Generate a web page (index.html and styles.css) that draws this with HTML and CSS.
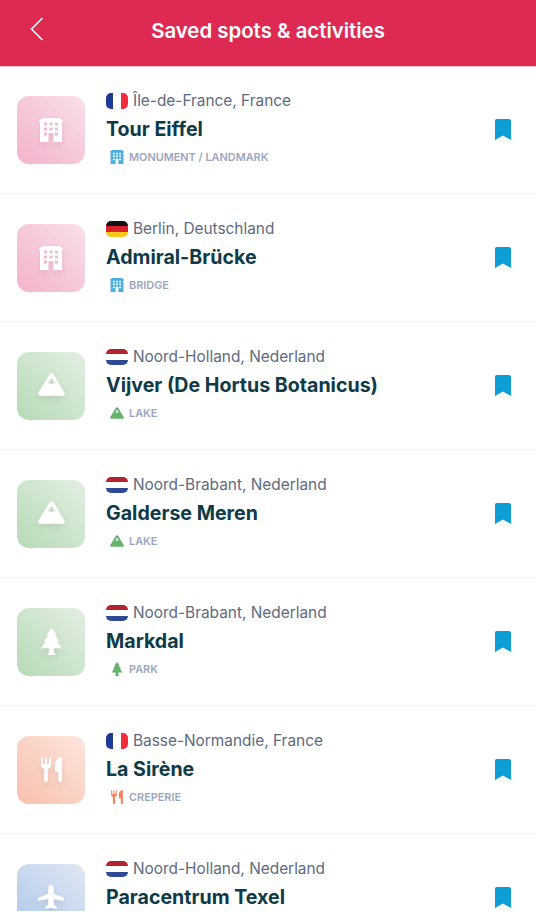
FILE: index.html
```html
<!DOCTYPE html>
<html lang="en">
<head>
	<meta charset="UTF-8">
	<title>Saved spots &amp; activities</title>
	<link rel="stylesheet" href="styles.css">
</head>
<body>
	<svg class="defs" width="0" height="0">
		<symbol id="i-building" viewBox="0 0 24 24">
			<path fill-rule="evenodd" d="M4 0H20L24 2.500V4H23V24H14.500V15H9.500V24H1V4H0V2.500ZM5 4.500V7.500H8V4.500ZM10.500 4.500V7.500H13.500V4.500ZM16 4.500V7.500H19V4.500ZM5 9.500V12.500H8V9.500ZM10.500 9.500V12.500H13.500V9.500ZM16 9.500V12.500H19V9.500ZM5 14.500V17.500H8V14.500ZM16 14.500V17.500H19V14.500Z"/>
		</symbol>
		<symbol id="i-mountain" viewBox="0 0 24 20">
			<path fill-rule="evenodd" d="M12 0C13 0 13.600 .6 14.200 1.600L23.400 16.800C24.400 18.500 23.500 20 21.600 20H2.400C.5 20-.4 18.500 .6 16.800L9.800 1.600C10.400 .6 11 0 12 0ZM12 4 8.500 9.800 10.500 8.600 12 10 13.500 8.600 15.500 9.800Z"/>
		</symbol>
		<symbol id="i-tree" viewBox="0 0 20 26">
			<path d="M10 0 15 6.500H13L17.500 12.500H15.500L20 19.500H12.500V23C12.500 24 13.500 25 14 26H6C6.500 25 7.500 24 7.500 23V19.500H0L4.500 12.500H2.500L7 6.500H5Z"/>
		</symbol>
		<symbol id="i-food" viewBox="0 0 21 25">
			<path d="M0 1C0 0 1.800 0 1.800 1V7H4.100V1C4.100 0 5.900 0 5.900 1V7H8.200V1C8.200 0 10 0 10 1V8.500C10 10.500 8.500 11.500 6.800 12V23.500C6.800 25.500 3.200 25.500 3.200 23.500V12C1.500 11.500 0 10.500 0 8.500ZM21 1V23.500C21 25.500 17.400 25.500 17.400 23.500V15H15.500C14.700 15 14 14.400 14 13.500V8C14 4 16.500 1.300 19.500 .2 20.400 -.1 21 .2 21 1Z"/>
		</symbol>
		<symbol id="i-plane" viewBox="0 0 28 28">
			<path d="M14 0C15.600 0 17 1.800 17 3.500V9.500L27 13.500C27.600 13.800 28 14.200 28 15V17L17 15V21L20 23.500V25.500L14 24.500 8 25.500V23.500L11 21V15L0 17V15C0 14.200 .4 13.800 1 13.500L11 9.500V3.500C11 1.800 12.400 0 14 0Z"/>
		</symbol>
		<symbol id="i-bookmark" viewBox="0 0 16 21">
			<path d="M2 0H14C15.200 0 16 .8 16 2V21L8 16.500 0 21V2C0 .8 .8 0 2 0Z"/>
		</symbol>
	</svg>

	<div class="header">
		<svg class="back" viewBox="0 0 14 24"><path d="M13 1 2 12 13 23"/></svg>
		<h1>Saved spots &amp; activities</h1>
	</div>

	<div class="list">
		<div class="row">
			<div class="tile pink"><svg class="tile-icon building"><use href="#i-building"/></svg></div>
			<div class="info">
				<div class="place"><span class="flag fr"></span>Île-de-France, France</div>
				<div class="name">Tour Eiffel</div>
				<div class="tag"><svg class="tag-icon c-blue"><use href="#i-building"/></svg>MONUMENT / LANDMARK</div>
			</div>
			<svg class="bookmark"><use href="#i-bookmark"/></svg>
		</div>
		<div class="row">
			<div class="tile pink"><svg class="tile-icon building"><use href="#i-building"/></svg></div>
			<div class="info">
				<div class="place"><span class="flag de"></span>Berlin, Deutschland</div>
				<div class="name">Admiral-Brücke</div>
				<div class="tag"><svg class="tag-icon c-blue"><use href="#i-building"/></svg>BRIDGE</div>
			</div>
			<svg class="bookmark"><use href="#i-bookmark"/></svg>
		</div>
		<div class="row">
			<div class="tile green"><svg class="tile-icon mountain"><use href="#i-mountain"/></svg></div>
			<div class="info">
				<div class="place"><span class="flag nl"></span>Noord-Holland, Nederland</div>
				<div class="name">Vijver (De Hortus Botanicus)</div>
				<div class="tag"><svg class="tag-icon c-green"><use href="#i-mountain"/></svg>LAKE</div>
			</div>
			<svg class="bookmark"><use href="#i-bookmark"/></svg>
		</div>
		<div class="row">
			<div class="tile green"><svg class="tile-icon mountain"><use href="#i-mountain"/></svg></div>
			<div class="info">
				<div class="place"><span class="flag nl"></span>Noord-Brabant, Nederland</div>
				<div class="name">Galderse Meren</div>
				<div class="tag"><svg class="tag-icon c-green"><use href="#i-mountain"/></svg>LAKE</div>
			</div>
			<svg class="bookmark"><use href="#i-bookmark"/></svg>
		</div>
		<div class="row">
			<div class="tile green"><svg class="tile-icon tree"><use href="#i-tree"/></svg></div>
			<div class="info">
				<div class="place"><span class="flag nl"></span>Noord-Brabant, Nederland</div>
				<div class="name">Markdal</div>
				<div class="tag"><svg class="tag-icon c-green"><use href="#i-tree"/></svg>PARK</div>
			</div>
			<svg class="bookmark"><use href="#i-bookmark"/></svg>
		</div>
		<div class="row">
			<div class="tile orange"><svg class="tile-icon food"><use href="#i-food"/></svg></div>
			<div class="info">
				<div class="place"><span class="flag fr"></span>Basse-Normandie, France</div>
				<div class="name">La Sirène</div>
				<div class="tag"><svg class="tag-icon c-orange"><use href="#i-food"/></svg>CREPERIE</div>
			</div>
			<svg class="bookmark"><use href="#i-bookmark"/></svg>
		</div>
		<div class="row">
			<div class="tile blue"><svg class="tile-icon plane"><use href="#i-plane"/></svg></div>
			<div class="info">
				<div class="place"><span class="flag nl"></span>Noord-Holland, Nederland</div>
				<div class="name">Paracentrum Texel</div>
			</div>
			<svg class="bookmark"><use href="#i-bookmark"/></svg>
		</div>
	</div>
</body>
</html>
```

FILE: styles.css
```css
*{
	margin: 0;
	padding: 0;
	box-sizing: border-box;
}
html,body{
	height: 914px;
	overflow: hidden;
	background-color: #fff;
}
body{
	font-family: "Inter", "Liberation Sans", sans-serif;
}
.defs{
	display: block;
	height: 0;
}
.header{
	height: 66px;
	background-color: #de2a52;
	box-shadow: 0 1px 0 #f0c3cd;
	display: flex;
	align-items: center;
	justify-content: center;
	position: relative;
}
.header h1{
	color: #fff;
	font-size: 20.400px;
	font-weight: 600;
	margin-bottom: 6px;
}
.back{
	position: absolute;
	left: 29px;
	top: 17px;
	width: 15px;
	height: 24px;
	fill: none;
	stroke: #fff;
	stroke-width: 1.6;
}
.list{
	height: 845px;
	overflow: hidden;
}
.row{
	height: 128px;
	display: flex;
	padding: 29.5px 25px 0 17px;
	border-bottom: 1px solid #f1f1f3;
}
.tile{
	width: 68px;
	height: 68px;
	border-radius: 12px;
	flex-shrink: 0;
	display: flex;
	align-items: center;
	justify-content: center;
	margin-right: 21px;
}
.pink{
	background: linear-gradient(45deg, #f4b2cb, #f9e0ea);
}
.green{
	background: linear-gradient(45deg, #b6dab6, #e3efe3);
}
.orange{
	background: linear-gradient(45deg, #f8c0ae, #fde5dd);
}
.blue{
	background: linear-gradient(45deg, #b0c8e8, #dfe8f4);
}
.tile-icon{
	fill: #fff;
	filter: drop-shadow(0 3px 3px rgba(0,0,0,.08));
}
.building{
	width: 24px;
	height: 24px;
}
.mountain{
	width: 27px;
	height: 23px;
	margin-bottom: 3px;
}
.tree{
	width: 21px;
	height: 27px;
}
.food{
	width: 21px;
	height: 25px;
}
.plane{
	width: 26px;
	height: 28px;
}
.info{
	flex: 1;
	margin-top: -3px;
}
.place{
	display: flex;
	align-items: center;
	height: 16px;
	font-size: 15.400px;
	color: #5d6a80;
}
.flag{
	width: 22px;
	height: 16px;
	border-radius: 5px;
	margin-right: 5px;
	flex-shrink: 0;
}
.fr{
	background: linear-gradient(90deg, #1e3a94 33%, #fff 33%, #fff 66%, #f02b3c 66%);
}
.de{
	background: linear-gradient(180deg, #111 33%, #d8222b 33%, #d8222b 66%, #f7c61b 66%);
}
.nl{
	background: linear-gradient(180deg, #b3242f 33%, #fff 33%, #fff 66%, #2f4a91 66%);
}
.name{
	font-size: 19.600px;
	font-weight: 700;
	color: #0f3a47;
	margin-top: 8px;
	line-height: 24px;
}
.tag{
	display: flex;
	align-items: center;
	font-size: 10.900px;
	font-weight: 600;
	color: #9aa7bd;
	margin-top: 9.5px;
	height: 14px;
}
.tag-icon{
	width: 14px;
	height: 14px;
	margin: 0 5px 0 4px;
}
.c-blue{
	fill: #4aaede;
}
.c-green{
	fill: #64b26c;
}
.c-orange{
	fill: #f5835a;
}
.bookmark{
	width: 16px;
	height: 21px;
	fill: #0b9fd3;
	margin-top: 23px;
	flex-shrink: 0;
}
```
